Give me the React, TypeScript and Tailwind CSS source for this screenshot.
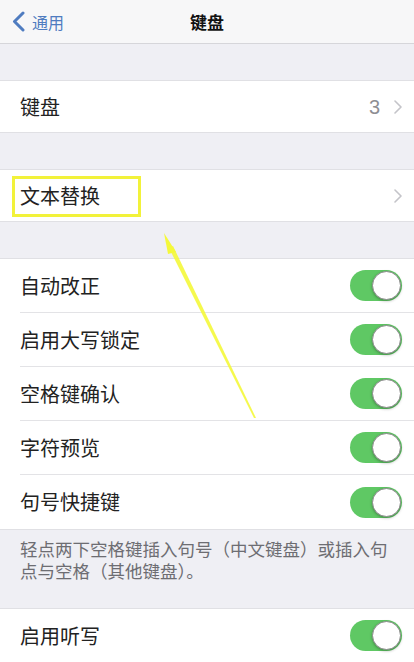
import React from 'react';

const font = { fontFamily: '"Noto Sans CJK SC", "Noto Sans", sans-serif' };

function Toggle() {
  return (
    <div className="relative h-[31px] w-[52px] rounded-full bg-[#5fc864]">
      <div className="absolute right-[1px] top-[1px] h-[29px] w-[29px] rounded-full border border-[#8a8a8a] bg-white shadow-[0_1px_3px_rgba(0,0,0,0.3)]" />
    </div>
  );
}

function Chevron() {
  return (
    <svg width="8" height="14" viewBox="0 0 8 14" fill="none">
      <path d="M1 1l6 6-6 6" stroke="#c4c4c9" strokeWidth="1.6" strokeLinecap="round" strokeLinejoin="round" />
    </svg>
  );
}

const toggles = ['自动改正', '启用大写锁定', '空格键确认', '字符预览', '句号快捷键'];

export default function App() {
  return (
    <div className="relative h-[662px] w-[414px] overflow-hidden bg-[#efeff4]" style={font}>
      {/* Nav bar */}
      <div className="relative flex h-[44px] items-center border-b border-[#d6d6da] bg-[#f7f7f8]">
        <div className="flex items-center gap-[7px] pl-[12px] text-[#4f7cc0]">
          <svg width="13" height="21" viewBox="0 0 13 21" fill="none">
            <path d="M11 2L2.5 10.5 11 19" stroke="#4f7cc0" strokeWidth="3" strokeLinecap="round" strokeLinejoin="round" />
          </svg>
          <span className="text-[16px] leading-none">通用</span>
        </div>
        <div className="absolute left-0 right-0 top-0 flex h-[43px] items-center justify-center text-[17px] font-bold text-[#111]">
          键盘
        </div>
      </div>

      <div className="h-[36px]" />

      <div className="flex h-[53px] items-center justify-between border-y border-[#e0e0e4] bg-white pl-[20px] pr-[12px]">
        <span className="text-[20px] text-[#222]">键盘</span>
        <div className="flex items-center gap-[14px]">
          <span className="text-[20px] text-[#8e8e93]" style={{ fontFamily: '"Liberation Sans", sans-serif' }}>3</span>
          <Chevron />
        </div>
      </div>

      <div className="h-[36px]" />

      <div className="flex h-[53px] items-center justify-between border-y border-[#e0e0e4] bg-white pl-[20px] pr-[12px]">
        <span className="text-[20px] text-[#222]">文本替换</span>
        <Chevron />
      </div>

      <div className="h-[36px]" />

      <div className="border-y border-[#e0e0e4] bg-white">
        {toggles.map((t, i) => (
          <div key={t} className="flex h-[54px] items-center pl-[20px]">
            <div
              className={
                'flex h-full flex-1 items-center justify-between pr-[12px] ' +
                (i < toggles.length - 1 ? 'border-b border-[#e3e3e6]' : '')
              }
            >
              <span className="text-[20px] text-[#222]">{t}</span>
              <Toggle />
            </div>
          </div>
        ))}
      </div>

      <div className="h-[78px] pl-[20px] pr-[22px] pt-[8px] text-[17.5px] leading-[22px] text-[#6d6d72]">
        轻点两下空格键插入句号（中文键盘）或插入句点与空格（其他键盘）。
      </div>

      <div className="flex h-[54px] items-center justify-between border-t border-[#e0e0e4] bg-white pl-[20px] pr-[12px]">
        <span className="text-[20px] text-[#222]">启用听写</span>
        <Toggle />
      </div>

      {/* Annotation overlay */}
      <div className="absolute left-[12px] top-[176px] h-[41px] w-[129px] border-[3px] border-[#f2f23a]" />
      <svg className="pointer-events-none absolute left-0 top-0" width="414" height="662">
        <polygon points="164,233 176,252 168,254" fill="#f4f83a" />
        <polygon points="169,248 173,246 256,418 254,418" fill="#f4f83a" opacity="0.9" />
      </svg>
    </div>
  );
}
